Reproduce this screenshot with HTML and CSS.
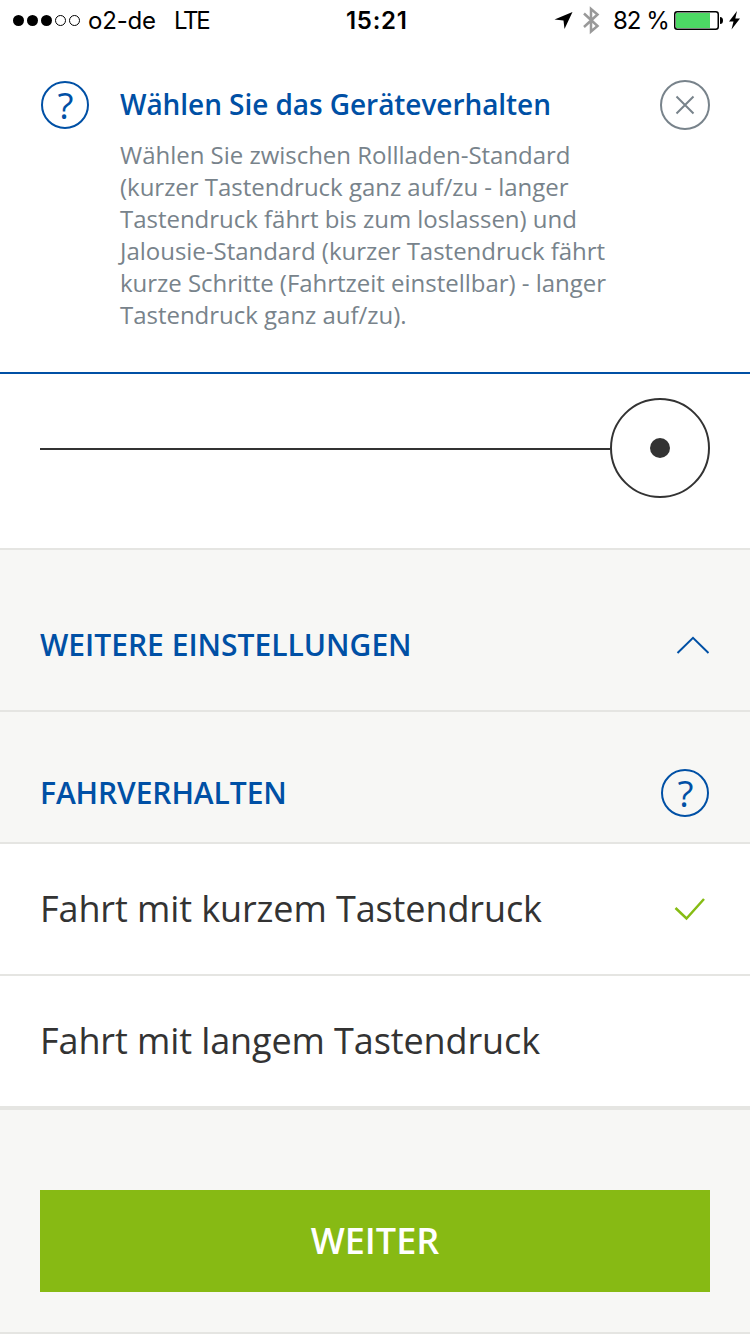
FILE: index.html
```
<!doctype html>
<html lang="de">
<head>
    <meta charset="UTF-8">
    <title>Geräteverhalten</title>
    <link rel="stylesheet" href="styles.css">
</head>
<body>

<div class="statusbar">
    <svg class="signal" width="70" height="40" viewBox="0 0 70 40">
        <circle cx="6.500" cy="20.500" r="5.500"/>
        <circle cx="20.500" cy="20.500" r="5.500"/>
        <circle cx="34.500" cy="20.500" r="5.500"/>
        <circle class="empty" cx="48.500" cy="20.500" r="5"/>
        <circle class="empty" cx="62.500" cy="20.500" r="5"/>
    </svg>
    <span class="carrier">o2-de</span>
    <span class="network">LTE</span>
    <span class="time">15:21</span>
    <svg class="location" width="20" height="40" viewBox="0 0 20 40">
        <path d="M18.500 12 L10.500 29 L9.500 20.500 L0.500 19.500 Z"/>
    </svg>
    <svg class="bluetooth" width="18" height="40" viewBox="0 0 18 40">
        <path d="M2 13.500 L15.500 26 L9 31.500 V9 L15.500 14.500 L2 27"/>
    </svg>
    <span class="percent">82 %</span>
    <svg class="battery" width="68" height="40" viewBox="0 0 68 40">
        <rect class="shell" x="0.750" y="11.750" width="43.500" height="17.500" rx="2.500"/>
        <rect class="charge" x="2" y="13" width="34" height="15"/>
        <path d="M46 17 a3 3.500 0 0 1 0 7 Z"/>
        <path d="M63 11 L55 21.500 H59.500 L57.500 29.500 L66 18.500 H61.300 Z"/>
    </svg>
</div>

<div class="help">
    <div class="question">?</div>
    <div class="help_text">
        <h1>Wählen Sie das Geräteverhalten</h1>
        <p>Wählen Sie zwischen Rollladen-Standard<br>
        (kurzer Tastendruck ganz auf/zu - langer<br>
        Tastendruck fährt bis zum loslassen) und<br>
        Jalousie-Standard (kurzer Tastendruck fährt<br>
        kurze Schritte (Fahrtzeit einstellbar) - langer<br>
        Tastendruck ganz auf/zu).</p>
    </div>
    <svg class="close" width="50" height="50" viewBox="0 0 50 50">
        <circle cx="25" cy="25" r="24"/>
        <path d="M16.500 16.500 L33.500 33.500 M33.500 16.500 L16.500 33.500"/>
    </svg>
</div>

<div class="slider">
    <div class="track"></div>
    <div class="knob"><div class="dot"></div></div>
</div>

<div class="section more">
    <h2>WEITERE EINSTELLUNGEN</h2>
    <svg class="arrow" width="34" height="20" viewBox="0 0 34 20">
        <path d="M1.500 18 L17 2.800 L32.500 18"/>
    </svg>
</div>

<div class="section behaviour">
    <h2>FAHRVERHALTEN</h2>
    <div class="question">?</div>
</div>

<ul class="options">
    <li>
        <span>Fahrt mit kurzem Tastendruck</span>
        <svg class="check" width="32" height="24" viewBox="0 0 32 24">
            <path d="M1.500 11 L12.500 21.500 L30 2"/>
        </svg>
    </li>
    <li><span>Fahrt mit langem Tastendruck</span></li>
</ul>

<div class="footer">
    <button type="button">WEITER</button>
</div>

</body>
</html>
```
FILE: styles.css
```
* {
    box-sizing: border-box;
}
body {
    margin: 0;
    width: 750px;
    height: 1334px;
    overflow: hidden;
    background: #ffffff;
    color: #333333;
    font-family: "Open Sans", sans-serif;
}
h1, h2, p, ul {
    margin: 0;
    padding: 0;
}
svg {
    display: block;
    flex: none;
}

/* status bar */
.statusbar {
    display: flex;
    height: 40px;
    padding-left: 12px;
    font-family: Inter, sans-serif;
    font-size: 24px;
    line-height: 41px;
    color: #000000;
    white-space: nowrap;
}
.signal .empty {
    fill: none;
    stroke: #000000;
    stroke-width: 1;
}
.carrier {
    width: 86px;
    padding-left: 6px;
    letter-spacing: -0.2px;
}
.network {
    width: 172px;
    padding-left: 6px;
    letter-spacing: -2.2px;
}
.time {
    width: 214px;
    padding-left: 6px;
    font-weight: 600;
    letter-spacing: 0.7px;
}
.bluetooth {
    margin-left: 8px;
    margin-right: 1px;
}
.bluetooth path {
    fill: none;
    stroke: #999999;
    stroke-width: 2.5;
}
.percent {
    width: 73px;
    padding-left: 12px;
    letter-spacing: -1px;
}
.battery .shell {
    fill: none;
    stroke: #000000;
    stroke-width: 1.5;
}
.battery .charge {
    fill: #4cd964;
}

/* help panel */
.help {
    display: flex;
    height: 334px;
    padding: 40px 40px 0;
    border-bottom: 2px solid #0050a5;
}
.question {
    flex: none;
    width: 48px;
    height: 48px;
    margin: 1px;
    border: 2px solid #0050a5;
    border-radius: 50%;
    color: #0050a5;
    font-size: 37px;
    line-height: 43px;
    text-align: center;
    text-indent: 1px;
}
.help_text {
    width: 540px;
    padding-left: 30px;
}
.help_text h1 {
    color: #0050a5;
    font-size: 28px;
    font-weight: 600;
    line-height: 48px;
    letter-spacing: -0.06px;
}
.help_text p {
    margin-top: 11px;
    color: #78838b;
    font-size: 24px;
    line-height: 32px;
    letter-spacing: -0.02px;
    white-space: nowrap;
}
.close {
    margin-left: 30px;
}
.close circle,
.close path {
    fill: none;
    stroke: #78838b;
    stroke-width: 2;
}

/* slider */
.slider {
    display: flex;
    align-items: center;
    height: 174px;
    padding: 0 40px 26px;
}
.track {
    flex: 1;
    height: 2px;
    margin-top: 2px;
    background: #333333;
}
.knob {
    display: flex;
    align-items: center;
    justify-content: center;
    width: 100px;
    height: 100px;
    border: 2px solid #333333;
    border-radius: 50%;
}
.dot {
    width: 20px;
    height: 20px;
    border-radius: 50%;
    background: #333333;
}

/* sections */
.section {
    display: flex;
    align-items: center;
    justify-content: space-between;
    padding: 0 40px;
    border-top: 2px solid #e5e5e2;
    background: #f7f7f5;
}
.section h2 {
    color: #0050a5;
    font-size: 30px;
    font-weight: 600;
    line-height: 40px;
}
.more {
    height: 162px;
    padding-top: 30px;
}
.behaviour {
    height: 132px;
    padding-top: 32px;
}
.behaviour h2 {
    letter-spacing: -0.1px;
}
.arrow path {
    fill: none;
    stroke: #0050a5;
    stroke-width: 2;
}

/* options */
.options {
    list-style: none;
    border-bottom: 4px solid #e5e5e2;
}
.options li {
    display: flex;
    align-items: center;
    justify-content: space-between;
    height: 132px;
    padding: 0 44px 0 40px;
    border-top: 2px solid #e5e5e2;
    font-size: 36px;
    letter-spacing: -0.1px;
}
.options span {
    padding-bottom: 2px;
}
.check path {
    fill: none;
    stroke: #86bc14;
    stroke-width: 2.5;
}

.footer {
    height: 224px;
    padding: 80px 40px 0;
    border-bottom: 2px solid #e5e5e2;
    background: #f7f7f5;
}
.footer button {
    display: block;
    width: 100%;
    height: 102px;
    padding: 0 0 2px;
    border: 0;
    background: #87ba14;
    color: #ffffff;
    font-family: inherit;
    font-size: 36px;
    font-weight: 600;
}
```
